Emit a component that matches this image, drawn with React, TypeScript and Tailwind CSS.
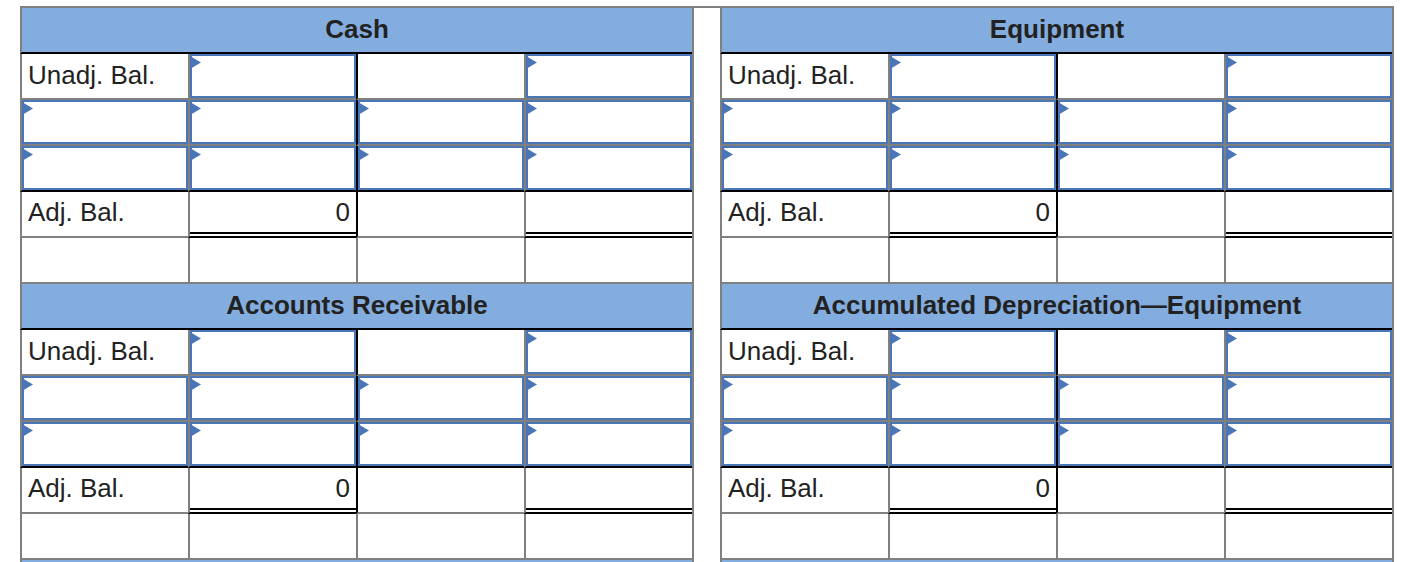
import React from "react";

function Tri() {
  return (
    <svg
      className="absolute -left-[2px] top-0"
      width="11"
      height="13"
      viewBox="0 0 11 13"
    >
      <polygon points="0,0 11,6.5 0,13" fill="#4a76b8" />
    </svg>
  );
}

function InputBox() {
  return (
    <div className="relative h-full w-full border-2 border-[#4a76b8] bg-white">
      <Tri />
    </div>
  );
}

type Left = "gray" | "black";
type Bottom = "gray" | "black" | "double" | "none";

function Cell({
  left,
  bottom,
  children,
  kind,
}: {
  left: Left;
  bottom: Bottom;
  children?: React.ReactNode;
  kind?: "label" | "input" | "value" | "empty";
}) {
  const leftCls =
    left === "gray" ? "border-l-2 border-l-[#808080]" : "border-l-2 border-l-black";
  let bottomCls = "";
  if (bottom === "gray") bottomCls = "border-b-2 border-b-[#808080]";
  else if (bottom === "black") bottomCls = "border-b-2 border-b-black";
  else if (bottom === "double") bottomCls = "border-b-2 border-b-black pb-[2px]";

  let inner: React.ReactNode = null;
  if (kind === "input") inner = <InputBox />;
  else if (kind === "label")
    inner = (
      <div className="flex h-full items-center pb-[1px] pl-[6px] text-[26px] text-[#222]">
        {children}
      </div>
    );
  else if (kind === "value" || bottom === "double")
    inner = (
      <div
        className={
          bottom === "double"
            ? "flex h-full items-center justify-end border-b-2 border-b-black pr-[6px] text-[26px] text-[#222]"
            : "flex h-full items-center justify-end pr-[6px] text-[26px] text-[#222]"
        }
      >
        {children}
      </div>
    );

  return (
    <div className={`w-[168px] shrink-0 bg-white ${leftCls} ${bottomCls}`}>
      {inner}
    </div>
  );
}

function TAccount({ title, headerOnly }: { title: string; headerOnly?: boolean }) {
  return (
    <div className="w-[674px] shrink-0 border-r-2 border-r-[#808080]">
      <div className="flex h-[48px] items-center justify-center border-t-2 border-l-2 border-b-2 border-t-[#808080] border-l-[#808080] border-b-black bg-[#84addf] pb-[1px] text-[26px] font-bold text-[#222]">
        {title}
      </div>
      {!headerOnly && (
        <>
          <div className="flex h-[46px]">
            <Cell left="gray" bottom="gray" kind="label">
              Unadj. Bal.
            </Cell>
            <Cell left="gray" bottom="gray" kind="input" />
            <Cell left="black" bottom="gray" kind="empty" />
            <Cell left="gray" bottom="gray" kind="input" />
          </div>
          <div className="flex h-[46px]">
            <Cell left="gray" bottom="gray" kind="input" />
            <Cell left="gray" bottom="gray" kind="input" />
            <Cell left="black" bottom="gray" kind="input" />
            <Cell left="gray" bottom="gray" kind="input" />
          </div>
          <div className="flex h-[46px]">
            <Cell left="gray" bottom="black" kind="input" />
            <Cell left="gray" bottom="black" kind="input" />
            <Cell left="black" bottom="black" kind="input" />
            <Cell left="gray" bottom="black" kind="input" />
          </div>
          <div className="flex h-[46px]">
            <div className="w-[168px] shrink-0 border-l-2 border-b-2 border-l-[#808080] border-b-[#808080] pb-[4px]">
              <div className="flex h-full items-center pl-[6px] text-[26px] text-[#222]">
                Adj. Bal.
              </div>
            </div>
            <Cell left="gray" bottom="double" kind="value">
              0
            </Cell>
            <Cell left="black" bottom="gray" kind="empty" />
            <Cell left="gray" bottom="double" kind="value" />
          </div>
          <div className="flex h-[44px]">
            <Cell left="gray" bottom="none" kind="empty" />
            <Cell left="gray" bottom="none" kind="empty" />
            <Cell left="gray" bottom="none" kind="empty" />
            <Cell left="gray" bottom="none" kind="empty" />
          </div>
        </>
      )}
    </div>
  );
}

function Block({
  left,
  right,
  top,
  headerOnly,
}: {
  left: string;
  right: string;
  top?: boolean;
  headerOnly?: boolean;
}) {
  return (
    <div className="flex">
      <TAccount title={left} headerOnly={headerOnly} />
      <div
        className={
          top
            ? "w-[26px] shrink-0 border-t-2 border-t-[#808080] bg-white"
            : "w-[26px] shrink-0 bg-white"
        }
      />
      <TAccount title={right} headerOnly={headerOnly} />
    </div>
  );
}

export default function App() {
  return (
    <div className="h-[562px] overflow-hidden bg-white pl-[20px] pt-[6px] font-['Liberation_Sans',Arial,sans-serif]">
      <Block left="Cash" right="Equipment" top />
      <Block left="Accounts Receivable" right="Accumulated Depreciation—Equipment" />
      <Block left="" right="" headerOnly />
    </div>
  );
}
